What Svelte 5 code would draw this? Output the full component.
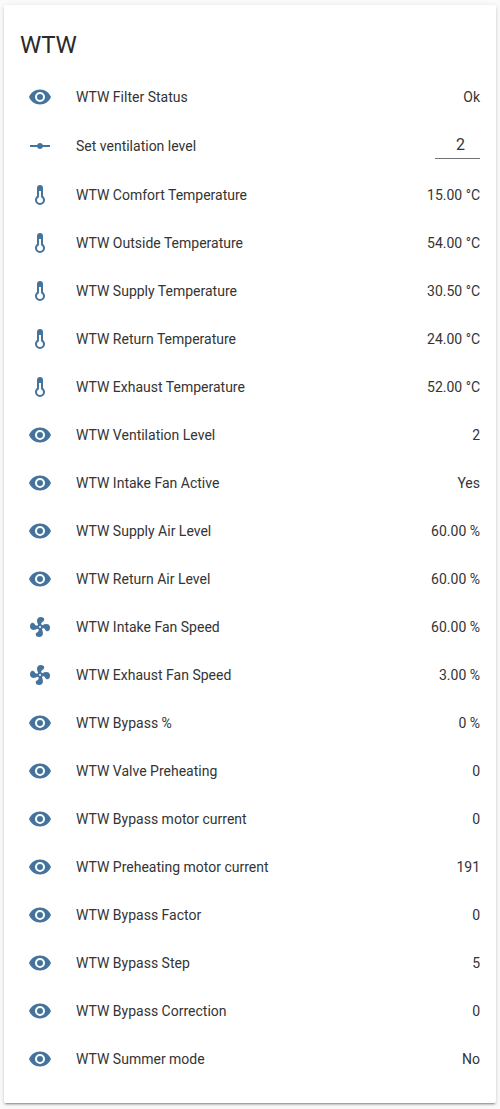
<script>
  const icons = {
    eye: 'M12,9A3,3 0 0,0 9,12A3,3 0 0,0 12,15A3,3 0 0,0 15,12A3,3 0 0,0 12,9M12,17A5,5 0 0,1 7,12A5,5 0 0,1 12,7A5,5 0 0,1 17,12A5,5 0 0,1 12,17M12,4.5C7,4.5 2.73,7.61 1,12C2.73,16.39 7,19.5 12,19.5C17,19.5 21.27,16.39 23,12C21.27,7.61 17,4.5 12,4.5Z',
    slider: 'M2,11H9.17C9.58,9.83 10.69,9 12,9C13.31,9 14.42,9.83 14.83,11H22V13H14.83C14.42,14.17 13.31,15 12,15C10.69,15 9.58,14.17 9.17,13H2V11Z',
    thermometer: 'M17,17A5,5 0 0,1 12,22A5,5 0 0,1 7,17C7,15.36 7.79,13.91 9,13V5A3,3 0 0,1 12,2A3,3 0 0,1 15,5V13C16.21,13.91 17,15.36 17,17M11,8V14.17C9.83,14.58 9,15.69 9,17A3,3 0 0,0 12,20A3,3 0 0,0 15,17C15,15.69 14.17,14.58 13,14.17V8H11Z',
    fan: 'M12,11A1,1 0 0,0 11,12A1,1 0 0,0 12,13A1,1 0 0,0 13,12A1,1 0 0,0 12,11M12.5,2C17,2 17.11,5.57 14.75,6.75C13.76,7.24 13.32,8.29 13.13,9.22C13.61,9.42 14.03,9.73 14.35,10.13C18.05,8.13 22.03,8.92 22.03,12.5C22.03,17 18.46,17.1 17.28,14.73C16.78,13.74 15.72,13.3 14.79,13.11C14.59,13.59 14.28,14 13.88,14.34C15.87,18.03 15.08,22 11.5,22C7,22 6.91,18.42 9.27,17.24C10.25,16.75 10.69,15.71 10.89,14.79C10.4,14.59 9.97,14.27 9.65,13.87C5.96,15.85 2,15.07 2,11.5C2,7 5.56,6.89 6.74,9.26C7.24,10.25 8.29,10.68 9.22,10.87C9.41,10.39 9.73,9.97 10.14,9.65C8.15,5.96 8.94,2 12.5,2Z'
  };

  let level = $state('2');

  const rows = [
    { icon: 'eye', name: 'WTW Filter Status', value: 'Ok' },
    { icon: 'slider', name: 'Set ventilation level', input: true },
    { icon: 'thermometer', name: 'WTW Comfort Temperature', value: '15.00 °C' },
    { icon: 'thermometer', name: 'WTW Outside Temperature', value: '54.00 °C' },
    { icon: 'thermometer', name: 'WTW Supply Temperature', value: '30.50 °C' },
    { icon: 'thermometer', name: 'WTW Return Temperature', value: '24.00 °C' },
    { icon: 'thermometer', name: 'WTW Exhaust Temperature', value: '52.00 °C' },
    { icon: 'eye', name: 'WTW Ventilation Level', value: '2' },
    { icon: 'eye', name: 'WTW Intake Fan Active', value: 'Yes' },
    { icon: 'eye', name: 'WTW Supply Air Level', value: '60.00 %' },
    { icon: 'eye', name: 'WTW Return Air Level', value: '60.00 %' },
    { icon: 'fan', name: 'WTW Intake Fan Speed', value: '60.00 %' },
    { icon: 'fan', name: 'WTW Exhaust Fan Speed', value: '3.00 %' },
    { icon: 'eye', name: 'WTW Bypass %', value: '0 %' },
    { icon: 'eye', name: 'WTW Valve Preheating', value: '0' },
    { icon: 'eye', name: 'WTW Bypass motor current', value: '0' },
    { icon: 'eye', name: 'WTW Preheating motor current', value: '191' },
    { icon: 'eye', name: 'WTW Bypass Factor', value: '0' },
    { icon: 'eye', name: 'WTW Bypass Step', value: '5' },
    { icon: 'eye', name: 'WTW Bypass Correction', value: '0' },
    { icon: 'eye', name: 'WTW Summer mode', value: 'No' }
  ];
</script>

<main class="view">
  <section class="card">
    <h1 class="title">WTW</h1>
    <div class="rows">
      {#each rows as row}
        <div class="row" class:tall={row.input}>
          <div class="badge">
            <svg viewBox="0 0 24 24" width="24" height="24"><path d={icons[row.icon]} /></svg>
          </div>
          <div class="name">{row.name}</div>
          {#if row.input}
            <input class="field" type="text" bind:value={level} />
          {:else}
            <div class="value">{row.value}</div>
          {/if}
        </div>
      {/each}
    </div>
  </section>
</main>

<style>
  :global(body) {
    background: #fafafa;
  }
  .view {
    box-sizing: border-box;
    height: 1109px;
    padding: 5px 4px 6px;
    font-family: Roboto, sans-serif;
    font-size: 14px;
    line-height: 20px;
    color: #343434;
  }
  .card {
    box-sizing: border-box;
    height: 1098px;
    padding: 0 16px;
    background: #fff;
    border-radius: 2px;
    box-shadow:
      0 2px 2px 0 rgba(0, 0, 0, 0.14),
      0 1px 5px 0 rgba(0, 0, 0, 0.12),
      0 3px 1px -2px rgba(0, 0, 0, 0.2);
  }
  .title {
    margin: 0;
    padding: 20px 0 12px;
    color: #2a2a2a;
    font-size: 24px;
    font-weight: 400;
    line-height: 40px;
    letter-spacing: -0.288px;
  }
  .rows {
    display: flex;
    flex-direction: column;
    gap: 8px;
  }
  .row {
    display: flex;
    align-items: center;
    height: 40px;
  }
  .row.tall {
    height: 42px;
  }
  .badge {
    display: flex;
    justify-content: center;
    flex: 0 0 40px;
  }
  .badge svg {
    display: block;
    fill: #44739e;
  }
  .name {
    flex: 1;
    padding-left: 16px;
    white-space: nowrap;
  }
  .value {
    text-align: right;
    white-space: nowrap;
  }
  .field {
    box-sizing: border-box;
    width: 45px;
    height: 27px;
    margin: 0 0 2px;
    padding: 0 0 1px 6px;
    border: 0;
    border-bottom: 1px solid #737373;
    border-radius: 0;
    outline: 0;
    background: transparent;
    color: #343434;
    font: 400 16px/24px Roboto, sans-serif;
    text-align: center;
  }
</style>
